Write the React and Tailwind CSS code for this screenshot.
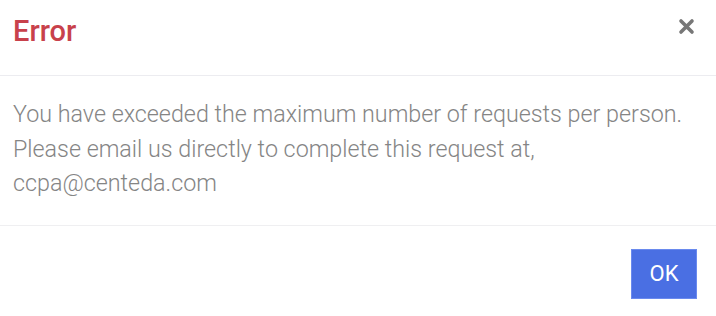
export default function App() {
  return (
    <div className="w-[716px] h-[316px] bg-white overflow-hidden" style={{ fontFamily: 'Roboto, "Liberation Sans", sans-serif' }}>
      {/* Header */}
      <div className="h-[76px] flex items-start justify-between pl-[13px] pr-[21px] pt-[17px] border-b border-[#ececf0]">
        <h2 className="text-[29px] font-medium text-[#c8414b] leading-none">Error</h2>
        <button className="mt-px w-[17px] h-[17px] flex items-center justify-center">
          <svg viewBox="0 0 17 17" className="w-[17px] h-[17px]">
            <path d="M3 3 L14 14 M14 3 L3 14" stroke="#777" strokeWidth="3.6" strokeLinecap="round" />
          </svg>
        </button>
      </div>

      {/* Body */}
      <div className="pl-[13px] pr-2 pt-[21px] pb-[24px] border-b border-[#efeff1]">
        <p className="text-[23.3px] font-light leading-[34.5px] text-[#858585] whitespace-nowrap">
          You have exceeded the maximum number of requests per person.
          <br />
          Please email us directly to complete this request at,
          <br />
          ccpa@centeda.com
        </p>
      </div>

      {/* Footer */}
      <div className="flex justify-end pt-[23px] pr-[19px]">
        <button className="w-[66px] h-[50px] bg-[#4a6fe3] border border-[#6a8aee] text-white text-[22px] flex items-center justify-center">
          OK
        </button>
      </div>
    </div>
  );
}
